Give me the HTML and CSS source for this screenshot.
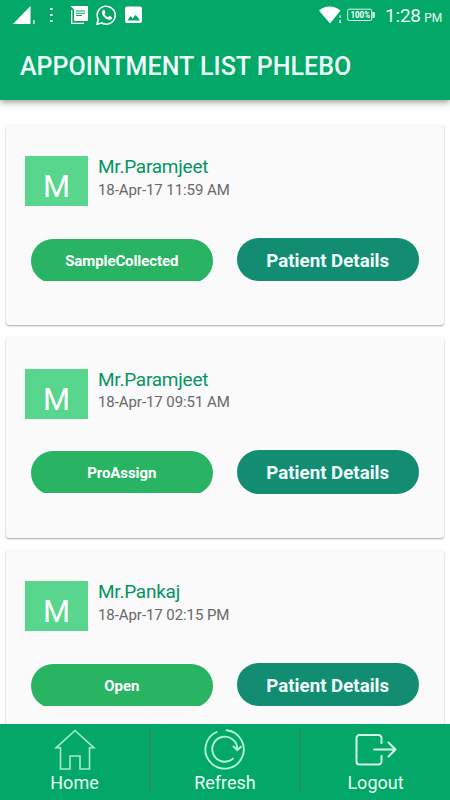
FILE: index.html
```html
<!DOCTYPE html>
<html lang="en">
<head>
<meta charset="utf-8">
<title>Appointment List Phlebo</title>
<link rel="stylesheet" href="styles.css">
</head>
<body>
<div class="app">
  <header class="header">
    <div class="status">
      <svg class="status-left" width="145" height="32" viewBox="0 0 145 32" fill="#fff">
        <path d="M13 24 30.500 6v18zM33 20.500l1.500-1v4.500h-1.200v-3z"/>
        <path d="M50 8h2.500v2H50zM50 14h2.500v2H50zM50 20h2.500v2H50z"/>
        <path fill-rule="evenodd" d="M70.500 6H87a1 1 0 0 1 1 1v13a1 1 0 0 1-1 1H75a1 1 0 0 1-1-1V9.500zM76 10.500v1h9v-1zm0 2.200v1h9v-1zm0 2.200v1h6v-1z"/>
        <path d="M71.700 10v13.300H84" fill="none" stroke="#fff" stroke-width="1.300"/>
        <path d="M97 24.200 98.300 19.500A9 9 0 1 1 101.700 23z" fill="none" stroke="#fff" stroke-width="1.600" stroke-linejoin="round"/>
        <path d="M103 10.200c.8-.6 1.400-.4 1.700.3l.7 1.700c.2.600-.6 1.200-.9 1.700 1 1.700 2 2.600 3.700 3.300.5-.3 1-1.400 1.500-1.200l2 .9c.8.500.2 2-.8 2.500-2.200 1-5-.5-6.800-2.400-1.600-1.700-3.200-4.800-1.100-6.800z"/>
        <path fill-rule="evenodd" d="M127 6.500h13a2 2 0 0 1 2 2V21a2 2 0 0 1-2 2h-13a2 2 0 0 1-2-2V8.500a2 2 0 0 1 2-2zM127.500 20.500H140l-4.200-5.700-3 3.700-2.300-2.500z"/>
      </svg>
      <svg class="status-right" width="66" height="32" viewBox="315 0 66 32" fill="#fff">
        <path d="M319 10.500C325 5 334 5 340.500 10.500L330 23.500z"/>
        <path d="M339.500 15.500h1.500v2h-1.500zM339.500 20h1.500v3h-1.500z"/>
        <rect x="347.700" y="9.200" width="24" height="11.300" rx="1.500" fill="none" stroke="#d8f8e9"/>
        <path d="M372.500 12h1.300q1 0 1 1v4q0 1-1 1h-1.300z"/>
        <text class="battery" x="350.500" y="18.300" textLength="19.500" lengthAdjust="spacingAndGlyphs">100%</text>
      </svg>
      <div class="clock">1:28 <small>PM</small></div>
    </div>
    <h1>APPOINTMENT LIST PHLEBO</h1>
  </header>
  <main class="list">
    <article class="card">
      <div class="person"><div class="avatar">M</div><div><h2>Mr.Paramjeet</h2><p>18-Apr-17 11:59 AM</p></div></div>
      <div class="actions"><div class="state"><span>SampleCollected</span></div><div class="details">Patient Details</div></div>
    </article>
    <article class="card">
      <div class="person"><div class="avatar">M</div><div><h2>Mr.Paramjeet</h2><p>18-Apr-17 09:51 AM</p></div></div>
      <div class="actions"><div class="state"><span>ProAssign</span></div><div class="details">Patient Details</div></div>
    </article>
    <article class="card">
      <div class="person"><div class="avatar">M</div><div><h2>Mr.Pankaj</h2><p>18-Apr-17 02:15 PM</p></div></div>
      <div class="actions"><div class="state"><span>Open</span></div><div class="details">Patient Details</div></div>
    </article>
  </main>
  <nav class="nav">
    <div class="tab">
      <svg width="42" height="42" viewBox="0 0 42 42"><path d="M21 1.500 40 18.800H35.500V40H26V27H16v13H6.500V18.800H2z"/></svg>
      <span>Home</span>
    </div>
    <div class="tab">
      <svg width="42" height="42" viewBox="0 0 42 42"><path class="ring" d="M12.500 3A19.200 19.200 0 1 0 22.500 1.300M29 29.600A12.500 12.500 0 1 1 33.300 20M29.500 17.500l3.800 3.700 3.700-3.400"/></svg>
      <span>Refresh</span>
    </div>
    <div class="tab">
      <svg width="42" height="42" viewBox="0 0 42 42"><path class="bold" d="M26.500 14V9a3 3 0 0 0-3-3H4.500a3 3 0 0 0-3 3v23.500a3 3 0 0 0 3 3h19a3 3 0 0 0 3-3V27M19 20.500h21M33.500 13.500l7 7-7 7"/></svg>
      <span>Logout</span>
    </div>
  </nav>
</div>
</body>
</html>
```

FILE: styles.css
```css
* { box-sizing: border-box; }
body { margin: 0; font-family: Roboto, sans-serif; background: #fff; }
h1, h2, p { margin: 0; font-weight: 400; }
svg { display: block; flex: none; }
.app { width: 450px; height: 800px; display: flex; flex-direction: column; overflow: hidden; }
.header { height: 100px; flex: none; background: #03a768; color: #fff; box-shadow: 0 2px 7px rgba(0,0,0,.42); z-index: 1; }
.status { height: 32px; display: flex; }
.status-right { margin-left: 170px; }
.battery { font: 700 9px Roboto, sans-serif; }
.clock { margin-left: 4px; font-size: 19px; line-height: 31px; white-space: nowrap; color: #e6fff3; letter-spacing: -.2px; }
.clock small { font-size: 12px; margin-left: -1px; }
h1 { padding-left: 20px; font-size: 25px; line-height: 30px; font-weight: 500; margin-top: 20px; white-space: nowrap; letter-spacing: .03px; color: #eefff8; }
.list { flex: 1; min-height: 0; overflow: hidden; padding: 24.500px 6px 0; display: flex; flex-direction: column; gap: 12px; }
.card { flex: none; height: 200.500px; background: #fafafa; border-radius: 3px; box-shadow: 0 1px 2px rgba(0,0,0,.35); padding: 31.500px 25px 0 19px; }
.person { display: flex; gap: 10px; height: 50px; }
.avatar { width: 63px; height: 50px; background: #58d68d; color: #fff; font-size: 31px; line-height: 61px; text-align: center; overflow: hidden; }
h2 { color: #049463; font-size: 19px; line-height: 22px; white-space: nowrap; letter-spacing: -.24px; }
p { color: #686868; font-size: 15px; line-height: 22px; margin-top: .5px; white-space: nowrap; letter-spacing: -.07px; }
.actions { margin: 31.500px 0 0 6px; display: flex; gap: 24.500px; }
.state { width: 181.500px; height: 42px; margin-top: 1.300px; overflow: hidden; }
.state span { display: block; height: 44px; border-radius: 22px; background: #28b463; color: #fff; font-size: 15px; font-weight: 700; line-height: 45px; letter-spacing: -.1px; text-align: center; }
.details { width: 181.500px; height: 43.500px; border-radius: 22px; background: #128d72; color: #f0fffb; font-size: 18.700px; font-weight: 700; line-height: 46px; text-align: center; }
.nav { height: 76px; flex: none; background: #03a768; display: grid; grid-template-columns: 149px 150px 151px; padding-top: 5px; z-index: 1; }
.tab { height: 63px; display: flex; flex-direction: column; align-items: center; color: #e6fff3; font-size: 18px; line-height: 24px; }
.tab + .tab { border-left: 2px solid #268c64; }
.tab path { fill: none; stroke: #a5ebca; stroke-width: 1.600; stroke-linecap: round; stroke-linejoin: miter; }
.tab .ring { stroke: #b4f5d6; stroke-width: 1.900; }
.tab .bold { stroke: #d2f8e6; stroke-width: 2; stroke-linejoin: round; }
```
